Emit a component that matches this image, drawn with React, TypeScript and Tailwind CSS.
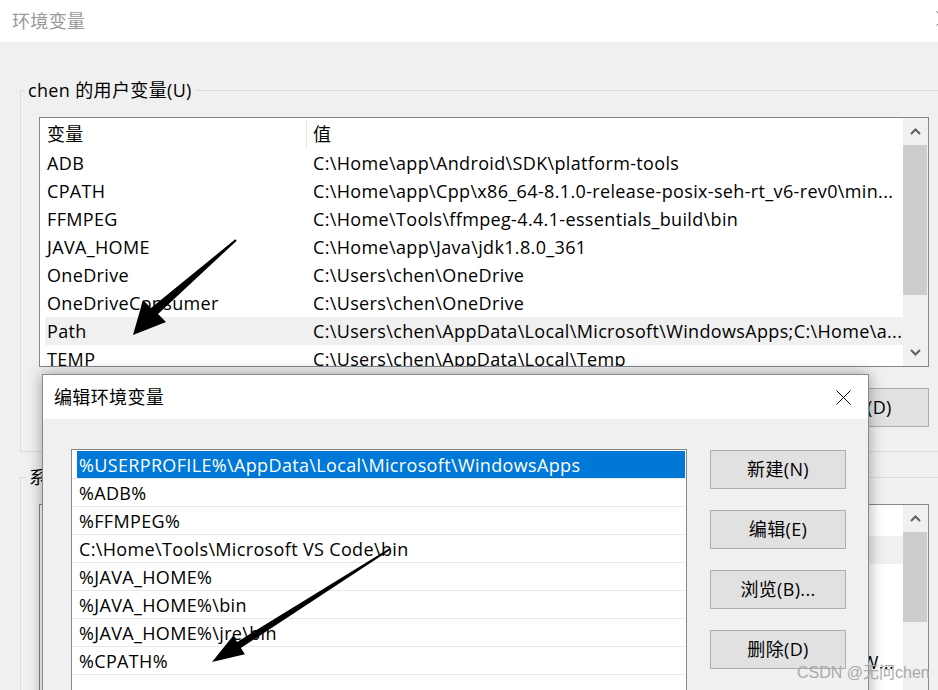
import clsx from 'clsx';

const USER_VARS: [string, string][] = [
  ['ADB', 'C:\\Home\\app\\Android\\SDK\\platform-tools'],
  ['CPATH', 'C:\\Home\\app\\Cpp\\x86_64-8.1.0-release-posix-seh-rt_v6-rev0\\min...'],
  ['FFMPEG', 'C:\\Home\\Tools\\ffmpeg-4.4.1-essentials_build\\bin'],
  ['JAVA_HOME', 'C:\\Home\\app\\Java\\jdk1.8.0_361'],
  ['OneDrive', 'C:\\Users\\chen\\OneDrive'],
  ['OneDriveConsumer', 'C:\\Users\\chen\\OneDrive'],
  ['Path', 'C:\\Users\\chen\\AppData\\Local\\Microsoft\\WindowsApps;C:\\Home\\a...'],
  ['TEMP', 'C:\\Users\\chen\\AppData\\Local\\Temp'],
  ['TMP', 'C:\\Users\\chen\\AppData\\Local\\Temp'],
];

// long system values are clipped, with the tail Windows keeps before the ellipsis
const SYS_VARS: [string, string, string?][] = [
  ['ComSpec', 'C:\\Windows\\system32\\cmd.exe'],
  ['DriverData', 'C:\\Windows\\System32\\Drivers\\DriverData'],
  ['NUMBER_OF_PROCESSORS', '16'],
  ['OS', 'Windows_NT'],
  ['Path', 'C:\\Windows\\system32;C:\\Windows;C:\\Windows\\System32\\Wbem;C:\\Windows\\System32\\', 'W...'],
  ['PATHEXT', '.COM;.EXE;.BAT;.CMD;.VBS;.VBE;.JS;.JSE;.WSF;.WSH;.MSC'],
];

const PATH_ITEMS = [
  '%USERPROFILE%\\AppData\\Local\\Microsoft\\WindowsApps',
  '%ADB%',
  '%FFMPEG%',
  'C:\\Home\\Tools\\Microsoft VS Code\\bin',
  '%JAVA_HOME%',
  '%JAVA_HOME%\\bin',
  '%JAVA_HOME%\\jre\\bin',
  '%CPATH%',
];

function Chevron({ down }: { down?: boolean }) {
  return (
    <svg width="11" height="7" viewBox="0 0 11 7" className={clsx(down && 'rotate-180')}>
      <path d="M1 6 L5.5 1.5 L10 6" fill="none" stroke="#606060" strokeWidth="2" />
    </svg>
  );
}

function CloseX() {
  return (
    <svg width="15" height="15" viewBox="0 0 15 15">
      <path d="M0.5 0.5 L14.5 14.5 M14.5 0.5 L0.5 14.5" stroke="#000" strokeWidth="1" />
    </svg>
  );
}

function ScrollBar({ thumb }: { thumb: number }) {
  return (
    <div className="flex flex-col w-[25px] h-full bg-[#f0f0f0]">
      <div className="h-[27px] flex items-center justify-center">
        <Chevron />
      </div>
      <div className="bg-[#cdcdcd] mr-[1px]" style={{ height: thumb }} />
      <div className="flex-1" />
      <div className="h-[27px] flex items-center justify-center">
        <Chevron down />
      </div>
    </div>
  );
}

function VarList({ rows, hot, thumb }: { rows: [string, string, string?][]; hot: number; thumb: number }) {
  return (
    <div className="flex w-[890px] h-[250px] border border-[#828790] bg-white overflow-hidden">
      <div className="flex-1 min-w-0 pl-[5px]">
        <div className="flex h-[31px] items-center pt-[2px]">
          <div className="w-[261px] pl-[2px]">变量</div>
          <div className="flex-1 h-full flex items-center border-l border-[#e5e5e5] pl-[6px]">值</div>
        </div>
        {rows.map(([k, v, tail], i) => (
          <div key={k} className={clsx('flex h-[28px] items-center whitespace-nowrap', i === hot && 'bg-[#f0f0f0]')}>
            <div className="w-[261px] pl-[2px] overflow-hidden">{k}</div>
            <div className={clsx('flex flex-1 min-w-0 pl-[7px]', tail ? 'pr-[9px]' : 'pr-[1px]')}>
              <span className="min-w-0 overflow-hidden">{v}</span>
              {tail && <span className="shrink-0">{tail}</span>}
            </div>
          </div>
        ))}
      </div>
      <ScrollBar thumb={thumb} />
    </div>
  );
}

function Btn({ children }: { children: React.ReactNode }) {
  return (
    <div className="w-[136px] h-[39px] shrink-0 flex items-center justify-center border border-[#adadad] bg-[#e1e1e1]">
      {children}
    </div>
  );
}

export default function App() {
  return (
    <div className="relative w-[938px] h-[690px] overflow-hidden bg-[#f0f0f0] text-[18px] text-black tracking-[0.35px] font-['Open_Sans','Noto_Sans_CJK_SC',sans-serif]">
      {/* back window */}
      <div className="h-[42px] bg-white flex items-center pl-3 text-[#999]">
        环境变量
        <div className="ml-auto -mr-[13px] mb-[6px] opacity-60">
          <CloseX />
        </div>
      </div>

      <div className="relative ml-5 mt-[48px] w-[940px] h-[362px] border border-[#dcdcdc] pl-[18px] pt-[26px]">
        <div className="absolute -top-[13px] left-[4px] px-[3px] leading-6 bg-[#f0f0f0]">chen 的用户变量(U)</div>
        <VarList rows={USER_VARS} hot={6} thumb={150} />
        <div className="flex w-[890px] justify-end gap-[21px] mt-[21px]">
          <Btn>新建(W)...</Btn>
          <Btn>编辑(I)...</Btn>
          <Btn>删除(D)</Btn>
        </div>
      </div>

      <div className="relative ml-5 mt-[25px] w-[940px] h-[300px] border border-[#dcdcdc] pl-[18px] pt-[26px]">
        <div className="absolute -top-[13px] left-[5px] px-[3px] leading-6 bg-[#f0f0f0]">系统变量(S)</div>
        <VarList rows={SYS_VARS} hot={0} thumb={90} />
      </div>

      {/* edit dialog */}
      <div className="absolute left-[42px] top-[374px] z-10 w-[827px] h-[340px] border border-[#8a8a8a] bg-[#f0f0f0] shadow-[0_0_14px_rgba(0,0,0,0.35)]">
        <div className="h-[44px] bg-white flex items-center justify-between pl-[11px] pr-[17px]">
          编辑环境变量
          <CloseX />
        </div>
        <div className="flex pl-[28px] pt-[30px] gap-[23px]">
          <div className="w-[616px] h-[260px] border border-[#828790] bg-white pt-[1px]">
            {PATH_ITEMS.map((p, i) => (
              <div key={p} className="mx-[1px] h-[28px] border-b border-[#e8e8e8]">
                <div
                  className={clsx(
                    'ml-[4px] h-[27px] pl-[2px] pt-[1px] flex items-center whitespace-nowrap',
                    i === 0 && 'bg-[#0078d7] text-white'
                  )}
                >
                  {p}
                </div>
              </div>
            ))}
          </div>
          <div className="flex flex-col gap-[21px] pt-[1px]">
            <Btn>新建(N)</Btn>
            <Btn>编辑(E)</Btn>
            <Btn>浏览(B)...</Btn>
            <Btn>删除(D)</Btn>
          </div>
        </div>
      </div>

      {/* annotation arrows */}
      <svg className="absolute inset-0 z-20 pointer-events-none" width="938" height="690">
        <polygon
          points="235.3,239.3 151,308 143,300 133,335 166,322 158,314 236.7,240.7"
          fill="#000"
        />
        <polygon
          points="389.5,548.2 237.1,642 233.1,635.7 212,662 244.9,654.3 240.9,648 390.5,549.8"
          fill="#000"
        />
      </svg>

      <div className="absolute z-30 left-[797px] top-[661px] text-[16px] tracking-normal text-[#a9a9a9] font-['Liberation_Sans','Noto_Sans_CJK_SC',sans-serif]">
        CSDN @无问chen
      </div>
    </div>
  );
}
